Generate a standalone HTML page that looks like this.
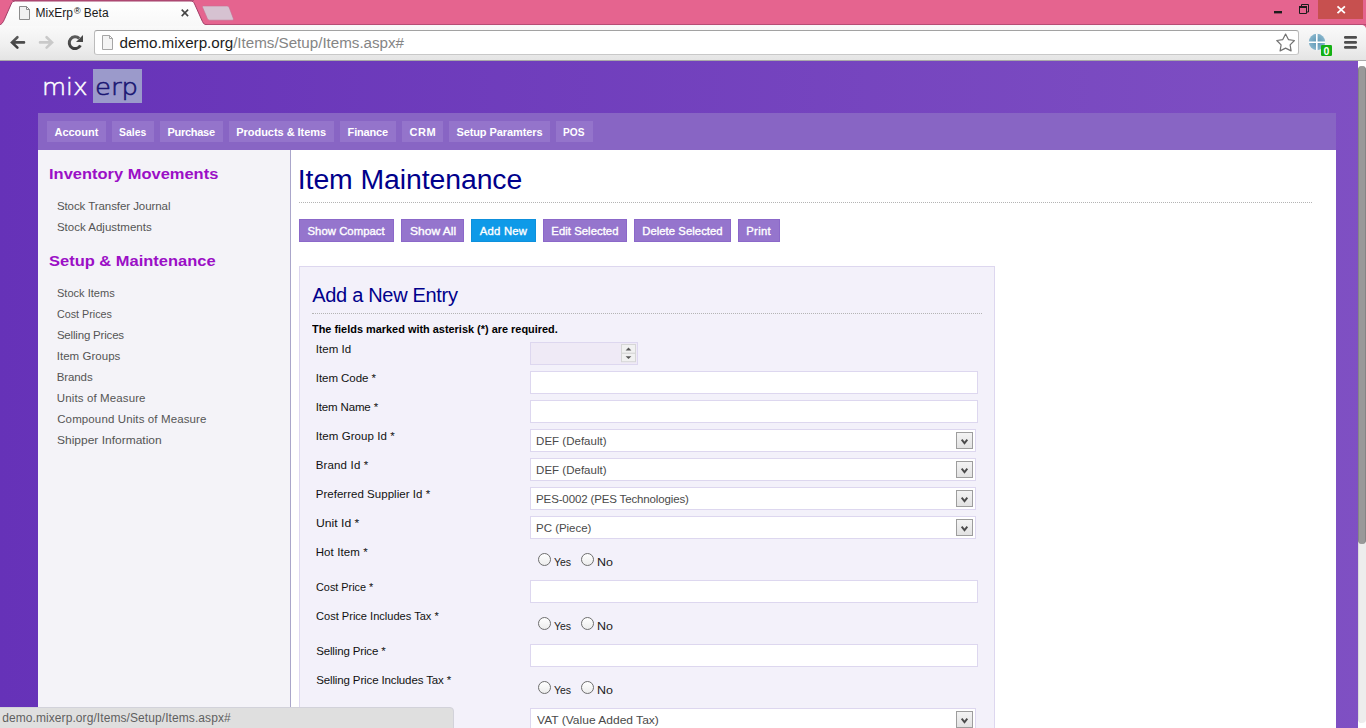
<!DOCTYPE html>
<html lang="en">
<head>
<meta charset="utf-8">
<title>MixErp® Beta</title>
<style>
html,body{margin:0;padding:0;}
body{width:1366px;height:728px;overflow:hidden;position:relative;background:#fff;
  font-family:"Liberation Sans",sans-serif;font-size:12px;color:#000;}
.abs{position:absolute;}
.t{position:absolute;display:block;white-space:nowrap;margin:0;padding:0;font-weight:normal;text-decoration:none;transform-origin:0 50%;}
/* ---------- browser chrome ---------- */
#titlebar{position:absolute;left:0;top:0;width:1366px;height:26px;background:#e5648f;}
#toolbar{position:absolute;left:0;top:25px;width:1366px;height:35px;background:linear-gradient(#fafafa,#f0f0f0 55%,#e4e4e4);}
#tbline{position:absolute;left:0;top:60px;width:1366px;height:1px;background:#a9a9a9;}
#omni{position:absolute;left:94px;top:30px;width:1205px;height:25px;background:#fff;border:1px solid #bcbcbc;border-top-color:#a2a2a2;border-bottom-color:#c8c8c8;border-radius:3px;box-sizing:border-box;}
.tt{color:#1a1a1a;}
.u1{color:#1c1c1c;}
.u1 .u2{color:#858585;}
/* ---------- page ---------- */
#page{position:absolute;left:0;top:61px;width:1366px;height:667px;background:linear-gradient(90deg,#6632b8 0%,#7f50c3 100%);overflow:hidden;}
.lm{color:#fff;}
.le{color:#1a1672;}
#logo-erp{position:absolute;left:93px;top:8px;width:49px;height:34px;background:#9b9acb;}
#nav{position:absolute;left:38px;top:52px;width:1298px;height:37px;background:#8865c4;}
.nb{position:absolute;top:8px;height:21px;background:#9474cb;}
.nt{color:#fff;font-weight:bold;}
#side{position:absolute;left:38px;top:89px;width:252px;height:578px;background:#f4f3f8;}
#sideb{position:absolute;left:290px;top:89px;width:1px;height:578px;background:#aaa6ca;}
#main{position:absolute;left:291px;top:89px;width:1045px;height:578px;background:#fff;}
.sh{font-weight:bold;color:#9b0fc6;}
.sl{color:#555;}
.h1{color:#00008b;}
.h2{color:#00008b;}
.dot{position:absolute;height:0;border-top:1px dotted #b4b4b4;}
.btn{position:absolute;top:158px;height:23px;box-sizing:border-box;background:#9575cd;border:1px solid #8b68c9;}
.bt{color:#fff;font-weight:normal;-webkit-text-stroke:0.35px currentColor;}
#panel{position:absolute;left:299px;top:205px;width:696px;height:480px;box-sizing:border-box;background:#f3f1fa;border:1px solid #ddd7ef;}
.rq{font-weight:bold;color:#000;}
.lb{color:#111;}
.st{color:#4a4a4a;}
.rl{color:#222;}
.sb{color:#5f5f5f;}
.inp{position:absolute;left:530px;width:448px;height:23px;box-sizing:border-box;background:#fff;border:1px solid #ddd7ef;}
.sel{position:absolute;left:530px;width:446px;height:23px;box-sizing:border-box;background:#fff;border:1px solid #ddd7ef;}
.sel .ar{position:absolute;right:2px;top:2px;width:17px;height:17px;box-sizing:border-box;border:1px solid #9d9d9d;background:linear-gradient(#f3f3f3,#e2e2e2);}
.rad{position:absolute;width:13px;height:13px;box-sizing:border-box;border:1px solid #6e6e6e;border-radius:50%;background:linear-gradient(#fff,#ececec);}
#status{position:absolute;left:-1px;top:646px;width:455px;height:23px;background:#dfdfdf;border:1px solid #d2d2da;border-top-right-radius:4px;box-sizing:border-box;}
#railbg{position:absolute;left:1358px;top:0;width:8px;height:667px;background:#fff;}
#rail{position:absolute;left:1358px;top:5px;width:8px;height:657px;background:#ededed;border-left:1px solid #dcdcdc;border-radius:4px;box-sizing:border-box;}
#thumb{position:absolute;left:1358px;top:5px;width:8px;height:478px;background:#999;border-left:1px solid #858585;border-right:1px solid #858585;border-radius:4px;box-sizing:border-box;}
</style>
</head>
<body>
<div id="titlebar"></div>
<div id="toolbar"></div>
<div id="tbline"></div>
<div id="omni"></div>
<svg id="chrome" class="abs" style="left:0;top:0" width="1366" height="61" viewBox="0 0 1366 61">
  <defs>
    <linearGradient id="tabg" x1="0" y1="0" x2="0" y2="1"><stop offset="0" stop-color="#ffffff"/><stop offset="1" stop-color="#f8f8f8"/></linearGradient>
    <linearGradient id="icg" x1="0" y1="0" x2="0" y2="1"><stop offset="0" stop-color="#5a5a5a"/><stop offset="1" stop-color="#3c3c3c"/></linearGradient>
    <radialGradient id="extg" cx="0.5" cy="0.5" r="0.6"><stop offset="0" stop-color="#5e97b5"/><stop offset="1" stop-color="#8fbbd0"/></radialGradient>
  </defs>
  <rect x="12" y="0" width="182" height="1" fill="#b8507a"/>
  <rect x="0" y="24" width="1366" height="1" fill="#b64c74"/>
  <!-- active tab -->
  <path d="M-2 25.5 C1.5 25 3 22.5 4.4 19.4 L11.2 4 C12.2 1.8 13.2 1 15.6 1 L190 1 C192.6 1 193.6 1.8 194.6 4 L202.4 21.4 C203.6 24 205 25 208 25.5 Z" fill="url(#tabg)" stroke="#a23e68" stroke-width="1"/>
  <rect x="0" y="25" width="1366" height="1" fill="#f8f8f8"/>
  <!-- new tab button -->
  <path d="M203.5 6 L226.5 6 C228 6 228.8 6.6 229.4 8 L233.3 18.4 C233.7 19.6 233.2 20.2 232 20.2 L210 20.2 C208.6 20.2 207.8 19.6 207.2 18.2 L202.6 7.4 C202.2 6.4 202.6 6 203.5 6 Z" fill="#d6c2d1" stroke="#c96b91" stroke-width="0.6"/>
  <!-- tab page icon -->
  <path d="M19.5 6.5 L26.5 6.5 L29.5 9.5 L29.5 19.5 L19.5 19.5 Z" fill="#f1f1f1" stroke="#8c8c8c" stroke-width="1"/>
  <path d="M26.5 6.5 L26.5 9.5 L29.5 9.5 Z" fill="#fff" stroke="#8c8c8c" stroke-width="1" stroke-linejoin="miter"/>
  <!-- tab close -->
  <path d="M181.7 9.6 L188.1 16.1 M188.1 9.6 L181.7 16.1" stroke="#454545" stroke-width="1.6" fill="none"/>
  <!-- window controls -->
  <rect x="1274" y="11" width="8" height="2.4" fill="#1c1c1c"/>
  <path d="M1299.5 7 h7 v6.5 h-7 Z" fill="none" stroke="#1c1c1c" stroke-width="1"/>
  <rect x="1299" y="6" width="8" height="2" fill="#1c1c1c"/>
  <path d="M1301.5 6 V4.5 H1308.5 V12 H1307" fill="none" stroke="#1c1c1c" stroke-width="1"/>
  <path d="M1362.5 25 H1366 V28.5 C1365.6 26.6 1364.6 25.4 1362.5 25 Z" fill="#d75a85"/>
  <rect x="1318" y="0" width="45" height="19" fill="#c7504f"/>
  <path d="M1337.5 6.4 L1344.9 13.2 M1344.9 6.4 L1337.5 13.2" stroke="#fff" stroke-width="1.8" fill="none"/>
  <!-- back -->
  <path d="M24 42.4 H12.6 M17.4 37.2 L12 42.4 L17.4 47.6" fill="none" stroke="url(#icg)" stroke-width="2.6" stroke-linecap="round" stroke-linejoin="miter"/>
  <!-- forward -->
  <path d="M40 42.4 H51.4 M46.6 37.2 L52 42.4 L46.6 47.6" fill="none" stroke="#c9c9c9" stroke-width="2.6" stroke-linecap="round" stroke-linejoin="miter"/>
  <!-- reload -->
  <path d="M80.4 45.4 A5.9 5.9 0 1 1 79.2 38.4" fill="none" stroke="url(#icg)" stroke-width="3"/>
  <path d="M83 35 L83 42 L76 42 Z" fill="#484848"/>
  <!-- omnibox page icon -->
  <path d="M102.5 35.5 L109.5 35.5 L112.5 38.5 L112.5 49.5 L102.5 49.5 Z" fill="#f4f4f4" stroke="#a6a6a6" stroke-width="1"/>
  <path d="M109.5 35.5 L109.5 38.5 L112.5 38.5 Z" fill="#fff" stroke="#a6a6a6" stroke-width="1"/>
  <!-- star -->
  <path d="M1285.6 34.1 L1288.4 39.6 L1294.4 40.5 L1290.1 44.9 L1291.1 50.9 L1285.6 48.1 L1280.1 50.9 L1281.1 44.9 L1276.8 40.5 L1282.8 39.6 Z" fill="#fff" stroke="#727272" stroke-width="1.2" stroke-linejoin="round"/>
  <!-- extension -->
  <circle cx="1317" cy="42" r="8.2" fill="url(#extg)"/>
  <path d="M1308.5 42.3 H1325.5 M1316.8 33.5 V50.5" stroke="#fff" stroke-width="1.6"/>
  <rect x="1321" y="45" width="11" height="11" rx="1.2" fill="#14b014"/>
  <text x="1326.5" y="54.5" font-family="Liberation Sans, sans-serif" font-weight="bold" font-size="10.5" fill="#fff" text-anchor="middle">0</text>
  <!-- menu -->
  <rect x="1344" y="36" width="13" height="2.7" rx="1.2" fill="#4e4e4e"/>
  <rect x="1344" y="41" width="13" height="2.7" rx="1.2" fill="#4e4e4e"/>
  <rect x="1344" y="46" width="13" height="2.7" rx="1.2" fill="#4e4e4e"/>
</svg>
<div id="page">
  <div id="logo-erp"></div>
  <div id="nav">
    <div class="nb" style="left:9px;width:59px"></div>
    <div class="nb" style="left:74px;width:42px"></div>
    <div class="nb" style="left:122px;width:63px"></div>
    <div class="nb" style="left:191px;width:105px"></div>
    <div class="nb" style="left:302px;width:56px"></div>
    <div class="nb" style="left:364px;width:41px"></div>
    <div class="nb" style="left:411px;width:101px"></div>
    <div class="nb" style="left:518px;width:37px"></div>
  </div>
  <div id="side"></div>
  <div id="sideb"></div>
  <div id="main"></div>
  <div class="dot" style="left:299px;top:141px;width:1013px"></div>
  <div class="btn" style="left:299px;width:95px"></div>
  <div class="btn" style="left:401px;width:63px"></div>
  <div class="btn" style="left:471px;width:65px;background:#0e9ae8;border-color:#0e90dc"></div>
  <div class="btn" style="left:543px;width:84px"></div>
  <div class="btn" style="left:634px;width:97px"></div>
  <div class="btn" style="left:738px;width:42px"></div>
  <div id="panel"></div>
  <div class="dot" style="left:312px;top:252px;width:670px"></div>
  <div class="inp" style="top:281px;width:108px;background:#efeaf6"></div>
  <svg class="abs" style="left:621px;top:283px" width="15" height="19" viewBox="0 0 15 19">
    <rect x="0.5" y="0.5" width="14" height="8.8" fill="#f1f1f1" stroke="#d6d6d6"/>
    <rect x="0.5" y="9.3" width="14" height="8.4" fill="#f1f1f1" stroke="#d6d6d6"/>
    <path d="M4.6 6.4 L7.5 3.5 L10.4 6.4 Z M4.6 12.2 L7.5 15.1 L10.4 12.2 Z" fill="#585858"/>
  </svg>
  <div class="inp" style="top:310px"></div>
  <div class="inp" style="top:339px"></div>
  <div class="sel" style="top:368px"><svg class="ar" width="17" height="17" viewBox="0 0 17 17"><path d="M5.3 7.5 L8.5 11.5 L11.7 7.5" fill="none" stroke="#4a4a4a" stroke-width="2.1"/></svg></div>
  <div class="sel" style="top:397px"><svg class="ar" width="17" height="17" viewBox="0 0 17 17"><path d="M5.3 7.5 L8.5 11.5 L11.7 7.5" fill="none" stroke="#4a4a4a" stroke-width="2.1"/></svg></div>
  <div class="sel" style="top:426px"><svg class="ar" width="17" height="17" viewBox="0 0 17 17"><path d="M5.3 7.5 L8.5 11.5 L11.7 7.5" fill="none" stroke="#4a4a4a" stroke-width="2.1"/></svg></div>
  <div class="sel" style="top:455px"><svg class="ar" width="17" height="17" viewBox="0 0 17 17"><path d="M5.3 7.5 L8.5 11.5 L11.7 7.5" fill="none" stroke="#4a4a4a" stroke-width="2.1"/></svg></div>
  <div class="rad" style="left:538px;top:492px"></div>
  <div class="rad" style="left:581px;top:492px"></div>
  <div class="inp" style="top:519px"></div>
  <div class="rad" style="left:538px;top:556px"></div>
  <div class="rad" style="left:581px;top:556px"></div>
  <div class="inp" style="top:583px"></div>
  <div class="rad" style="left:538px;top:620px"></div>
  <div class="rad" style="left:581px;top:620px"></div>
  <div class="sel" style="top:647px"><svg class="ar" width="17" height="17" viewBox="0 0 17 17"><path d="M5.3 7.5 L8.5 11.5 L11.7 7.5" fill="none" stroke="#4a4a4a" stroke-width="2.1"/></svg></div>
  <div id="railbg"></div>
  <div id="rail"></div>
  <div id="thumb"></div>
  <div id="status"></div>
</div>
<div class="t tt" style="left:35.5px;top:4.8px;font-size:12px;line-height:16px;letter-spacing:0.04px;">MixErp<span style="font-size:9px;position:relative;top:-2.5px;margin:0 3px 0 1px;color:#000">®</span>Beta</div>
<div class="t u1" style="left:119.5px;top:32.7px;font-size:15.2px;line-height:20px;letter-spacing:-0.02px;">demo.mixerp.org<span class="u2">/Items/Setup/Items.aspx#</span></div>
<div class="t lm" style="left:41.8px;top:72.2px;font-size:23.2px;line-height:30px;transform:scaleX(1.0648);font-family:DejaVu Sans Light,DejaVu Sans,sans-serif;font-weight:200;-webkit-text-stroke:0.45px currentColor;">mix</div>
<div class="t le" style="left:95.3px;top:72.2px;font-size:23.2px;line-height:30px;transform:scaleX(1.1166);font-family:DejaVu Sans Light,DejaVu Sans,sans-serif;font-weight:200;-webkit-text-stroke:0.55px currentColor;">erp</div>
<a class="t nt" style="left:54.6px;top:125.0px;font-size:11px;line-height:14px;letter-spacing:-0.05px;">Account</a>
<a class="t nt" style="left:119.4px;top:125.0px;font-size:11px;line-height:14px;transform:scaleX(0.9480);">Sales</a>
<a class="t nt" style="left:167.4px;top:125.0px;font-size:11px;line-height:14px;letter-spacing:-0.26px;">Purchase</a>
<a class="t nt" style="left:236.3px;top:125.0px;font-size:11px;line-height:14px;letter-spacing:-0.04px;">Products &amp; Items</a>
<a class="t nt" style="left:347.6px;top:125.0px;font-size:11px;line-height:14px;letter-spacing:-0.18px;">Finance</a>
<a class="t nt" style="left:409.5px;top:125.0px;font-size:11px;line-height:14px;letter-spacing:0.51px;">CRM</a>
<a class="t nt" style="left:456.4px;top:125.0px;font-size:11px;line-height:14px;letter-spacing:-0.09px;">Setup Paramters</a>
<a class="t nt" style="left:563.0px;top:125.0px;font-size:11px;line-height:14px;transform:scaleX(0.9207);">POS</a>
<h3 class="t sh" style="left:49.4px;top:163.6px;font-size:15.5px;line-height:20px;transform:scaleX(1.0625);">Inventory Movements</h3>
<h3 class="t sh" style="left:49.2px;top:250.6px;font-size:15.5px;line-height:20px;transform:scaleX(1.0632);">Setup &amp; Maintenance</h3>
<a class="t sl" style="left:56.9px;top:198.5px;font-size:11.5px;line-height:15px;letter-spacing:-0.07px;">Stock Transfer Journal</a>
<a class="t sl" style="left:56.9px;top:219.5px;font-size:11.5px;line-height:15px;letter-spacing:0.01px;">Stock Adjustments</a>
<a class="t sl" style="left:56.7px;top:285.5px;font-size:11.5px;line-height:15px;transform:scaleX(0.9602);">Stock Items</a>
<a class="t sl" style="left:57.3px;top:306.5px;font-size:11.5px;line-height:15px;transform:scaleX(0.9345);">Cost Prices</a>
<a class="t sl" style="left:56.9px;top:327.5px;font-size:11.5px;line-height:15px;letter-spacing:-0.19px;">Selling Prices</a>
<a class="t sl" style="left:56.7px;top:348.5px;font-size:11.5px;line-height:15px;letter-spacing:0.04px;">Item Groups</a>
<a class="t sl" style="left:56.7px;top:369.5px;font-size:11.5px;line-height:15px;letter-spacing:-0.09px;">Brands</a>
<a class="t sl" style="left:56.8px;top:390.5px;font-size:11.5px;line-height:15px;letter-spacing:0.12px;">Units of Measure</a>
<a class="t sl" style="left:57.2px;top:411.5px;font-size:11.5px;line-height:15px;letter-spacing:0.12px;">Compound Units of Measure</a>
<a class="t sl" style="left:56.6px;top:432.5px;font-size:11.5px;line-height:15px;transform:scaleX(1.0425);">Shipper Information</a>
<h1 class="t h1" style="left:297.8px;top:161.3px;font-size:28.4px;line-height:37px;letter-spacing:-0.08px;">Item Maintenance</h1>
<span class="t bt" style="left:307.5px;top:223.6px;font-size:11.3px;line-height:15px;letter-spacing:0.05px;">Show Compact</span>
<span class="t bt" style="left:409.8px;top:223.6px;font-size:11.3px;line-height:15px;transform:scaleX(1.0637);">Show All</span>
<span class="t bt" style="left:479.8px;top:223.6px;font-size:11.3px;line-height:15px;letter-spacing:0.22px;">Add New</span>
<span class="t bt" style="left:551.3px;top:223.6px;font-size:11.3px;line-height:15px;letter-spacing:0.05px;">Edit Selected</span>
<span class="t bt" style="left:642.2px;top:223.6px;font-size:11.3px;line-height:15px;letter-spacing:0.05px;">Delete Selected</span>
<span class="t bt" style="left:746.3px;top:223.6px;font-size:11.3px;line-height:15px;letter-spacing:0.29px;">Print</span>
<h2 class="t h2" style="left:312.3px;top:282.1px;font-size:20px;line-height:26px;letter-spacing:-0.32px;">Add a New Entry</h2>
<p class="t rq" style="left:311.9px;top:321.5px;font-size:11.5px;line-height:15px;transform:scaleX(0.9496);">The fields marked with asterisk (*) are required.</p>
<label class="t lb" style="left:315.8px;top:341.7px;font-size:11.5px;line-height:15px;letter-spacing:0.02px;">Item Id</label>
<label class="t lb" style="left:315.8px;top:370.5px;font-size:11.5px;line-height:15px;letter-spacing:-0.06px;">Item Code *</label>
<label class="t lb" style="left:315.8px;top:399.5px;font-size:11.5px;line-height:15px;letter-spacing:-0.16px;">Item Name *</label>
<label class="t lb" style="left:315.8px;top:428.5px;font-size:11.5px;line-height:15px;letter-spacing:0.07px;">Item Group Id *</label>
<label class="t lb" style="left:315.7px;top:457.5px;font-size:11.5px;line-height:15px;letter-spacing:0.16px;">Brand Id *</label>
<label class="t lb" style="left:315.7px;top:486.5px;font-size:11.5px;line-height:15px;letter-spacing:0.03px;">Preferred Supplier Id *</label>
<label class="t lb" style="left:315.7px;top:515.5px;font-size:11.5px;line-height:15px;transform:scaleX(1.0577);">Unit Id *</label>
<label class="t lb" style="left:315.7px;top:544.5px;font-size:11.5px;line-height:15px;letter-spacing:0.11px;">Hot Item *</label>
<label class="t lb" style="left:315.8px;top:579.5px;font-size:11.5px;line-height:15px;transform:scaleX(0.9442);">Cost Price *</label>
<label class="t lb" style="left:315.8px;top:608.5px;font-size:11.5px;line-height:15px;transform:scaleX(0.9620);">Cost Price Includes Tax *</label>
<label class="t lb" style="left:316.2px;top:643.5px;font-size:11.5px;line-height:15px;letter-spacing:-0.15px;">Selling Price *</label>
<label class="t lb" style="left:316.2px;top:672.5px;font-size:11.5px;line-height:15px;letter-spacing:-0.13px;">Selling Price Includes Tax *</label>
<span class="t st" style="left:536.1px;top:433.5px;font-size:11.5px;line-height:15px;letter-spacing:0.01px;">DEF (Default)</span>
<span class="t st" style="left:536.1px;top:462.5px;font-size:11.5px;line-height:15px;letter-spacing:0.01px;">DEF (Default)</span>
<span class="t st" style="left:536.1px;top:491.5px;font-size:11.5px;line-height:15px;letter-spacing:-0.14px;">PES-0002 (PES Technologies)</span>
<span class="t st" style="left:536.1px;top:520.5px;font-size:11.5px;line-height:15px;letter-spacing:-0.04px;">PC (Piece)</span>
<span class="t st" style="left:537.1px;top:712.6px;font-size:11.5px;line-height:15px;transform:scaleX(1.0452);">VAT (Value Added Tax)</span>
<label class="t rl" style="left:554.1px;top:555.0px;font-size:10.5px;line-height:14px;letter-spacing:-0.10px;">Yes</label>
<label class="t rl" style="left:597.2px;top:555.0px;font-size:10.5px;line-height:14px;transform:scaleX(1.1864);">No</label>
<label class="t rl" style="left:554.1px;top:619.0px;font-size:10.5px;line-height:14px;letter-spacing:-0.10px;">Yes</label>
<label class="t rl" style="left:597.2px;top:619.0px;font-size:10.5px;line-height:14px;transform:scaleX(1.1864);">No</label>
<label class="t rl" style="left:554.1px;top:683.0px;font-size:10.5px;line-height:14px;letter-spacing:-0.10px;">Yes</label>
<label class="t rl" style="left:597.2px;top:683.0px;font-size:10.5px;line-height:14px;transform:scaleX(1.1864);">No</label>
<div class="t sb" style="left:2.2px;top:710.2px;font-size:12px;line-height:16px;letter-spacing:0.08px;">demo.mixerp.org/Items/Setup/Items.aspx#</div>

</body>
</html>
